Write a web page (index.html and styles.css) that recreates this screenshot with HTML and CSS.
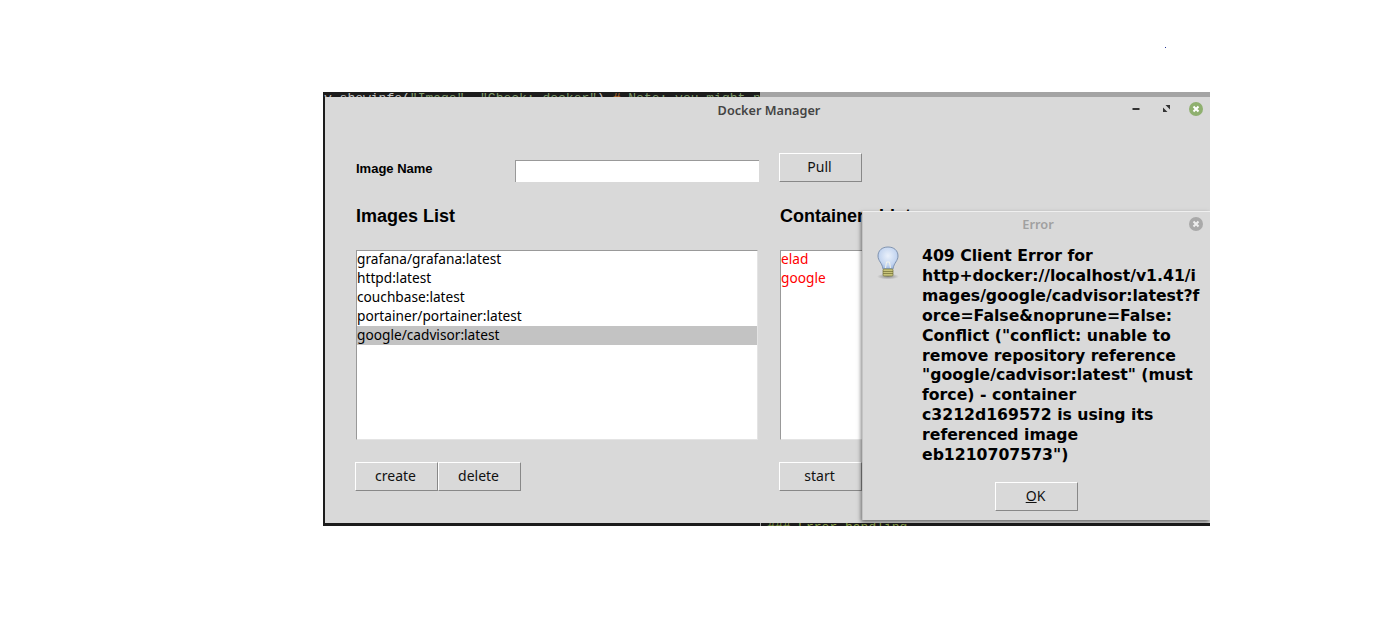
FILE: index.html
```html
<!DOCTYPE html>
<html lang="en">
<head>
    <meta charset="UTF-8">
    <meta name="viewport" content="width=device-width, initial-scale=1.0">
    <title>Docker Manager</title>
    <link rel="stylesheet" href="styles.css">
</head>
<body>
    <span class="stray-dot"></span>

    <div class="screen">
        <div class="terminal">
            <div class="terminal-top"><span class="term-plain">y.showinfo(</span>"Image", "Check: docker"<span class="term-plain">)</span> <span class="term-mark">#</span> Note: you might nee</div>
            <div class="terminal-bottom">### Error handling</div>
        </div>

        <div class="window">
            <div class="titlebar">
                <span class="titlebar-text">Docker Manager</span>
                <div class="win-buttons">
                    <svg class="win-icon" viewBox="0 0 14 14"><rect x="3.500" y="6" width="7" height="2" fill="#333"/></svg>
                    <svg class="win-icon" viewBox="0 0 14 14"><path d="M6.500 3H11v4.500zM4 5.500V10h4.500z" fill="#333"/></svg>
                    <svg class="win-icon" viewBox="0 0 14 14"><circle cx="7" cy="7" r="7" fill="#8fb06f"/><path d="M4.500 4.500l5 5M9.500 4.500l-5 5" stroke="#fff" stroke-width="2"/></svg>
                </div>
            </div>

            <div class="content">
                <div class="left-col">
                    <div class="name-row">
                        <label class="name-label">Image Name</label>
                        <div class="name-entry"></div>
                    </div>
                    <h2 class="list-title">Images List</h2>
                    <ul class="listbox">
                        <li>grafana/grafana:latest</li>
                        <li>httpd:latest</li>
                        <li>couchbase:latest</li>
                        <li>portainer/portainer:latest</li>
                        <li class="selected">google/cadvisor:latest</li>
                    </ul>
                    <div class="button-row">
                        <button class="tk-button">create</button>
                        <button class="tk-button">delete</button>
                    </div>
                </div>

                <div class="right-col">
                    <div class="pull-row">
                        <button class="tk-button">Pull</button>
                    </div>
                    <h2 class="list-title">Containers List</h2>
                    <ul class="listbox containers">
                        <li>elad</li>
                        <li>google</li>
                    </ul>
                    <div class="button-row">
                        <button class="tk-button">start</button>
                    </div>
                </div>
            </div>
        </div>

        <div class="dialog">
            <div class="dialog-title">
                <span class="dialog-title-text">Error</span>
                <svg class="dialog-close" viewBox="0 0 14 14"><circle cx="7" cy="7" r="7" fill="#a9a9a9"/><path d="M4.500 4.500l5 5M9.500 4.500l-5 5" stroke="#eee" stroke-width="2"/></svg>
            </div>
            <div class="dialog-body">
                <svg class="bulb" viewBox="0 0 24 34">
                    <defs>
                        <radialGradient id="glass" cx="50%" cy="40%" r="60%">
                            <stop offset="0" stop-color="#eaf1fb"/>
                            <stop offset="0.7" stop-color="#c5d6f0"/>
                            <stop offset="1" stop-color="#9db9e6"/>
                        </radialGradient>
                        <radialGradient id="bulb-shadow">
                            <stop offset="0" stop-color="#8a8a8a"/>
                            <stop offset="1" stop-color="#d9d9d9"/>
                        </radialGradient>
                    </defs>
                    <ellipse cx="12" cy="30.500" rx="11" ry="3" fill="url(#bulb-shadow)"/>
                    <path d="M12 1C6 1 2 4.500 2 10c0 5 4 6.500 5 13h10c1-6.500 5-8 5-13 0-5.500-4-9-10-9z" fill="url(#glass)" stroke="#8194b0"/>
                    <path d="M9.500 22l1-6h3l1 6" fill="none" stroke="#f4f4ea"/>
                    <rect x="7" y="23" width="10" height="7" rx="1" fill="#c8c47a" stroke="#77763c" stroke-width=".7"/>
                    <path d="M7 25.500h10M7 27.500h10" stroke="#6e6c34" stroke-width=".7"/>
                </svg>
                <div class="dialog-message">
                    <div>409 Client Error for</div>
                    <div>http+docker://localhost/v1.41/i</div>
                    <div>mages/google/cadvisor:latest?f</div>
                    <div>orce=False&amp;noprune=False:</div>
                    <div>Conflict ("conflict: unable to</div>
                    <div>remove repository reference</div>
                    <div>"google/cadvisor:latest" (must</div>
                    <div>force) - container</div>
                    <div>c3212d169572 is using its</div>
                    <div>referenced image</div>
                    <div>eb1210707573")</div>
                </div>
            </div>
            <div class="dialog-actions">
                <button class="tk-button"><u>O</u>K</button>
            </div>
        </div>
    </div>
</body>
</html>
```

FILE: styles.css
```css
html, body {
    margin: 0;
    height: 100%;
    overflow: hidden;
    background-color: #fff;
}
body {
    font-family: "Noto Sans", sans-serif;
    color: #000;
}
.stray-dot {
    position: absolute;
    left: 1165px;
    top: 47px;
    width: 1px;
    height: 1px;
    background-color: #223399;
}

/* the screenshot is cropped here, so shadows stop at this edge */
.screen {
    position: absolute;
    left: 0;
    top: 0;
    width: 1210px;
    height: 526px;
    overflow: hidden;
}

/* what shows behind the app window */
.terminal {
    position: absolute;
    left: 323px;
    top: 92px;
    width: 887px;
    height: 434px;
    overflow: hidden;
    background: linear-gradient(to right, #1c1c1c 0, #1c1c1c 437px, #a4a4a4 437px, #a4a4a4 100%);
    font-family: "Liberation Mono", monospace;
    font-size: 13px;
    color: #7f9a6a;
}
.terminal-top {
    width: 437px;
    height: 5px;
    overflow: hidden;
    margin-left: 1px;
    line-height: 14px;
    white-space: nowrap;
}
.term-plain {
    color: #c4c4c4;
}
.term-mark {
    color: #d0762c;
}
.terminal-bottom {
    position: absolute;
    left: 438px;
    right: 0;
    bottom: 0;
    height: 3px;
    overflow: hidden;
    padding-left: 6px;
    line-height: 9px;
    background-color: #1c1c1c;
    color: #8aa04a;
}

.window {
    position: absolute;
    left: 324px;
    top: 97px;
    width: 886px;
    height: 426px;
    box-sizing: border-box;
    overflow: hidden;
    background-color: #d9d9d9;
    border-left: 1px solid #1c1c1c;
}
.titlebar {
    position: relative;
    height: 26px;
    display: flex;
    align-items: center;
    justify-content: center;
}
.titlebar-text {
    padding-left: 3px;
    font-size: 12.700px;
    font-weight: 600;
    color: #444;
}
.win-buttons {
    position: absolute;
    right: 7px;
    top: 5px;
    display: flex;
    gap: 16px;
}
.win-icon {
    width: 14px;
    height: 14px;
}

.content {
    display: flex;
    padding-left: 31px;
}
.left-col {
    width: 424px;
}
.right-col {
    width: 420px;
}

.name-row {
    display: flex;
    align-items: center;
    height: 29px;
    margin-top: 30px;
}
.name-label {
    width: 159px;
    padding-top: 2px;
    font-family: "Liberation Sans", sans-serif;
    font-size: 13px;
    font-weight: bold;
}
.name-entry {
    width: 244px;
    height: 22px;
    margin-top: 7px;
    background-color: #fff;
    border-top: 1px solid #999;
    border-left: 1px solid #999;
    box-sizing: border-box;
}
.pull-row {
    display: flex;
    margin-top: 30px;
    margin-left: -1px;
}

.list-title {
    margin: 23px 0 0;
    height: 45px;
    font-family: "Liberation Sans", sans-serif;
    font-size: 18px;
    line-height: 22px;
    font-weight: bold;
    white-space: nowrap;
}
.listbox {
    list-style: none;
    margin: 0;
    padding: 0;
    width: 402px;
    height: 190px;
    box-sizing: border-box;
    background-color: #fff;
    border-top: 1px solid #999;
    border-left: 1px solid #999;
    border-right: 1px solid #e4e4e4;
    border-bottom: 1px solid #e4e4e4;
    font-size: 13.700px;
}
.listbox li {
    height: 19px;
    line-height: 17px;
    white-space: nowrap;
}
.listbox li:first-child {
    margin-top: -1px;
}
.listbox li.selected {
    background-color: #c3c3c3;
}
.containers {
    color: #f00;
}

.button-row {
    display: flex;
    margin-top: 22px;
    margin-left: -1px;
}
.tk-button {
    width: 83px;
    height: 29px;
    padding: 0 2px 3px 0;
    box-sizing: border-box;
    background-color: #d9d9d9;
    border: 1px solid;
    border-color: #fff #888 #888 #fff;
    font-family: "Noto Sans", sans-serif;
    font-size: 14px;
    color: #111;
}

.dialog {
    position: absolute;
    left: 862px;
    top: 211px;
    width: 348px;
    height: 309px;
    box-sizing: border-box;
    background-color: #d9d9d9;
    border-top: 1px solid #efefef;
    border-left: 1px solid #c4c4c4;
    box-shadow: -1px 2px 4px rgba(0, 0, 0, 0.5);
}
.dialog-title {
    position: relative;
    height: 24px;
    display: flex;
    align-items: center;
    justify-content: center;
}
.dialog-title-text {
    padding-left: 3px;
    font-size: 12.800px;
    font-weight: 600;
    color: #a0a0a0;
}
.dialog-close {
    position: absolute;
    right: 7px;
    top: 5px;
    width: 14px;
    height: 14px;
}
.dialog-body {
    display: flex;
    padding: 10px 0 0 13px;
    height: 236px;
}
.bulb {
    width: 24px;
    height: 34px;
    margin-right: 22px;
    flex-shrink: 0;
}
.dialog-message {
    font-family: "DejaVu Sans", sans-serif;
    font-size: 15.700px;
    font-weight: bold;
    line-height: 19.900px;
    white-space: nowrap;
}
.dialog-actions {
    display: flex;
    justify-content: center;
}
```
